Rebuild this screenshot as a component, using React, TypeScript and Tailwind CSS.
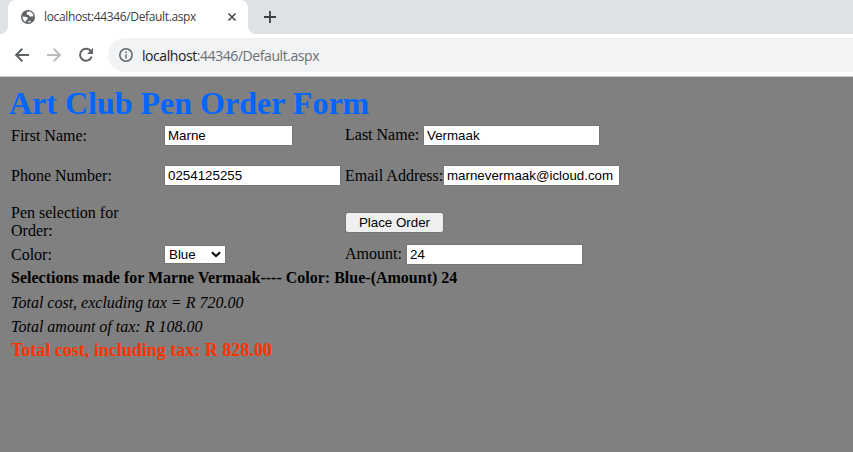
import type { ReactNode } from "react";

function Field({ value, width }: { value: string; width: string }) {
  return (
    <input
      type="text"
      defaultValue={value}
      className={`block h-[19px] shrink-0 bg-white px-[3px] font-['Liberation_Sans',Arial,sans-serif] text-[13.333px] leading-[19px] text-black shadow-[0_0_0_1px_#767676] outline-none ${width}`}
    />
  );
}

function Row({ label, left, right, className }: { label: ReactNode; left?: ReactNode; right: ReactNode; className: string }) {
  return (
    <div className={`grid grid-cols-[154px_180px_1fr] items-center ${className}`}>
      <div>{label}</div>
      <div>{left}</div>
      <div className="flex items-center whitespace-nowrap">{right}</div>
    </div>
  );
}

function BrowserBar() {
  return (
    <header className="h-[77px] border-b border-[#c8c9cb] bg-white font-['Open_Sans','Noto_Sans',sans-serif]">
      <div className="flex h-[34px] bg-[#dee1e6]">
        <div className="w-2 shrink-0 bg-white">
          <div className="h-full rounded-br-lg bg-[#dee1e6]" />
        </div>
        <div className="flex w-[240px] shrink-0 items-center rounded-t-lg bg-white pl-[13px]">
          <svg width="14" height="14" viewBox="0 0 14 14" className="shrink-0">
            <circle cx="7" cy="7" r="7" fill="#5f6368" />
            <path d="M8.3 1.6 6.2 2.1 5.5 3.8 6.4 4.7 8 4.9 8.3 6.3 10.2 6.6 12.5 6.3C12.4 3.8 10.7 2 8.3 1.6ZM1.5 6.5 4.5 6.8 6.6 7.6 6.8 9.2 5.1 9.9 4.8 12.1C2.8 11.2 1.4 9 1.5 6.5ZM6.4 12.5 8.2 10.8 9.5 10.7 9.9 11.7C8.9 12.3 7.7 12.6 6.4 12.5Z" fill="#fff" />
          </svg>
          <span className="ml-[9px] w-[183px] text-[12px] tracking-[-0.36px] text-[#3c4043]">localhost:44346/Default.aspx</span>
          <svg width="10" height="10" viewBox="0 0 10 10" stroke="#45494d" strokeWidth="1.6" className="shrink-0">
            <path d="m1.5 1.5 7 7m0-7-7 7" />
          </svg>
        </div>
        <div className="w-2 shrink-0 bg-white">
          <div className="h-full rounded-bl-lg bg-[#dee1e6]" />
        </div>
        <svg width="12" height="12" viewBox="0 0 12 12" stroke="#3c4043" strokeWidth="1.8" className="mt-[11px] ml-2">
          <path d="M6 0v12M0 6h12" />
        </svg>
      </div>
      <div className="flex h-[42px] items-center pl-[14px]">
        <svg width="16" height="16" viewBox="0 0 16 16" fill="none" stroke="#5f6368" strokeWidth="2">
          <path d="M15 8H2.5M8.3 1.8 2.1 8l6.2 6.2" />
        </svg>
        <svg width="16" height="16" viewBox="0 0 16 16" fill="none" stroke="#babcbe" strokeWidth="2" className="ml-4">
          <path d="M1 8h12.5M7.7 1.8 13.9 8l-6.2 6.2" />
        </svg>
        <svg width="16" height="16" viewBox="0 0 16 16" fill="none" stroke="#5f6368" strokeWidth="2" className="ml-4">
          <path d="M13.2 4.7A6 6 0 1 0 13.7 9.7" />
          <path d="M15 1v6H9Z" fill="#5f6368" stroke="none" />
        </svg>
        <div className="ml-[14px] flex h-[34px] flex-1 items-center rounded-l-full bg-[#f1f3f4] pl-[11px]">
          <svg width="14" height="14" viewBox="0 0 14 14" fill="none" stroke="#5f6368" strokeWidth="1.5">
            <circle cx="7" cy="7" r="6.2" />
            <path d="M7 6.2v4.3M7 3.5V5" />
          </svg>
          <span className="ml-[9px] text-[14px] tracking-[-0.43px] text-[#6b6f73]">
            <span className="text-[#202124]">localhost</span>:44346/Default.aspx
          </span>
        </div>
      </div>
    </header>
  );
}

export default function App() {
  return (
    <div className="h-[452px] w-[853px] overflow-hidden bg-[#808080]">
      <BrowserBar />
      <main className="pl-[11px] font-['Liberation_Serif','Times_New_Roman',serif] text-[16px] leading-[18px] text-black">
        <h1 className="-ml-[2px] h-[49px] pt-2 text-[32px] leading-[37px] font-bold text-[#0066ff]">Art Club Pen Order Form</h1>
        <Row
          className="h-[19px]"
          label="First Name:"
          left={<Field value="Marne" width="w-[127px]" />}
          right={<><span className="w-[79px] pb-[2px] leading-4">Last Name:</span><Field value="Vermaak" width="w-[175px]" /></>}
        />
        <Row
          className="mt-[21px] h-[19px]"
          label="Phone Number:"
          left={<Field value="0254125255" width="w-[175px]" />}
          right={<><span className="w-[99px]">Email Address:</span><Field value="marnevermaak@icloud.com" width="w-[175px]" /></>}
        />
        <Row
          className="mt-[19px] h-[37px]"
          label={<div className="pb-px">Pen selection for<br />Order:</div>}
          right={
            <button className="ml-px h-[19px] w-[97px] rounded-[2px] bg-[#efefef] font-['Liberation_Sans',Arial,sans-serif] text-[13.333px] leading-[19px] shadow-[0_0_0_1px_#767676]">
              Place Order
            </button>
          }
        />
        <Row
          className="mt-1 h-[19px]"
          label="Color:"
          left={
            <button className="flex h-[17px] w-[60px] items-center justify-between bg-white pr-[4px] pl-[4px] font-['Liberation_Sans',Arial,sans-serif] text-[13.333px] leading-[17px] shadow-[0_0_0_1px_#767676]">
              Blue
              <svg width="10" height="7" viewBox="0 0 10 7" fill="none" stroke="#000" strokeWidth="2">
                <path d="m1 1.2 4 4 4-4" />
              </svg>
            </button>
          }
          right={<><span className="w-[62px] pb-[2px] leading-4">Amount:</span><Field value="24" width="w-[175px]" /></>}
        />
        <p className="mt-[2px] leading-6 font-bold">Selections made for Marne Vermaak---- Color: Blue-(Amount) 24</p>
        <p className="mt-px leading-6 italic">Total cost, excluding tax = R 720.00</p>
        <p className="leading-6 italic">Total amount of tax: R 108.00</p>
        <p className="text-[18px] leading-[22px] font-bold text-[#ff3300]">Total cost, including tax: R 828.00</p>
      </main>
    </div>
  );
}
